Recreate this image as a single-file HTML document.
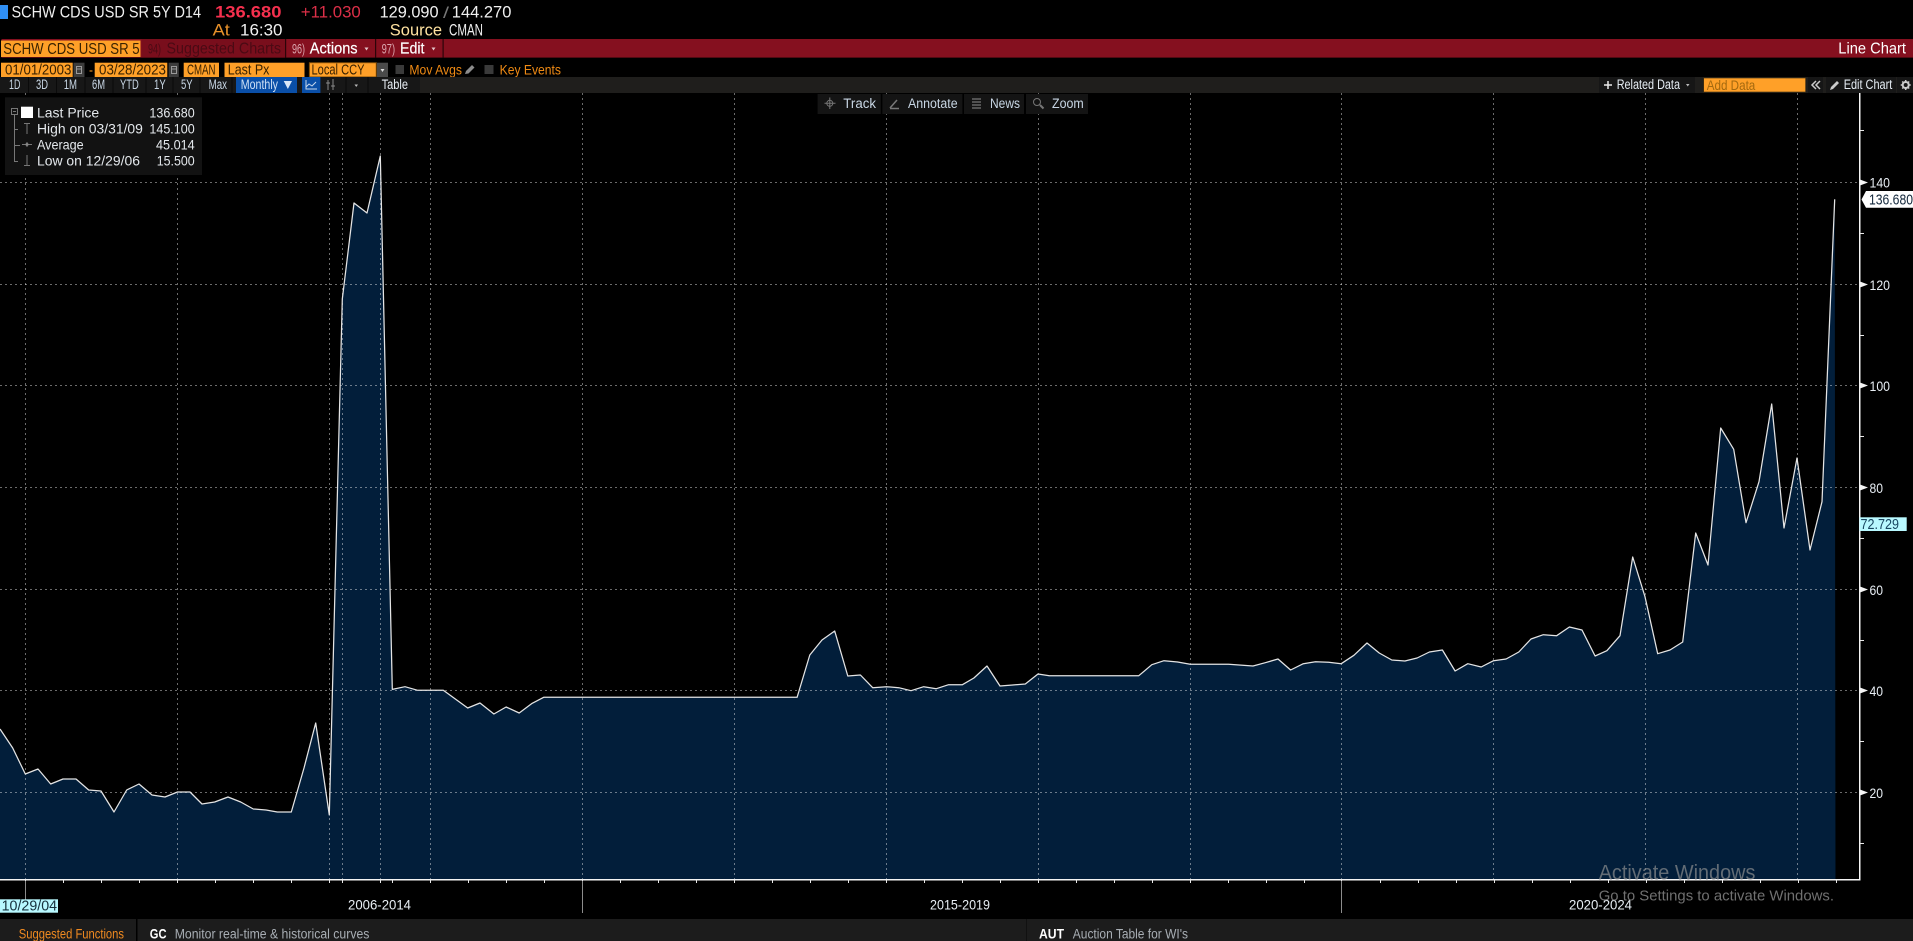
<!DOCTYPE html>
<html lang="en">
<head>
<meta charset="utf-8">
<title>SCHW CDS USD SR 5Y D14 - Line Chart</title>
<style>
html,body{margin:0;padding:0;background:#000;width:1913px;height:941px;overflow:hidden}
svg{display:block}
text{font-family:"Liberation Sans",sans-serif;white-space:pre}
.t1{font-size:16.5px;fill:#f0f0f0}
.tb{font-size:13.5px;fill:#c8d6e4}
.or{font-size:14.5px;fill:#3a2200}
.lg{font-size:14px;fill:#e4e8ec}
.ax{font-size:14px;fill:#e8eef4}
.grid{stroke:#fff;stroke-opacity:.42;stroke-dasharray:2 3;stroke-width:1;fill:none}
</style>
</head>
<body>
<svg width="1913" height="941" viewBox="0 0 1913 941" xmlns="http://www.w3.org/2000/svg">
<rect width="1913" height="941" fill="#000"/>

<!-- ===== Chart ===== -->
<polygon fill="#021e3a" points="0,729 12.7,748 25.3,774 38,769 50.7,784 63,779 76,779 88.7,790 101,791 114,812 126.7,790 139,784 152,795 165,797 177.5,792 190,792 202,804 214.7,802 228,797 240.7,802 253.3,809 266,810 277.3,812 291.3,812 304,768 315.7,723 329.3,815 342.3,299 354,203 367,213 380.3,156 392.3,689.4 405,686.7 417.7,690.3 443.3,690.3 467.7,708 480,703 493.9,714 506.1,707 519.2,713 532.2,703.3 543.7,697.3 797.1,697.3 809.8,655 822,640 834.7,631 847.8,676 860.4,675 872.7,687.7 886.5,686.7 898.8,687.7 911,690.7 923.7,686.7 936.3,688.7 948.6,684.7 962.4,684.7 973.9,678 987,666 1000,686 1012.7,685 1025.3,684 1038,674 1049.4,675.7 1138.8,675.7 1151.8,664.7 1164,660.7 1177.6,662 1190.2,664.3 1228.6,664.3 1253,666 1265.3,662.7 1278,659 1290.6,670 1303.3,663.7 1315.5,661.7 1328.6,662.3 1341.2,663.7 1353.9,655.3 1367,643 1379.2,653 1391.8,660 1404.9,661 1417.1,658 1429.4,652 1442.4,650 1455.1,671 1467.8,663.7 1481.2,667 1493.5,660.7 1506.1,659 1518.8,652 1531,639 1543.3,634.7 1556.7,635.7 1569.4,627 1582,630 1595.1,656 1606.9,650.7 1620,635.7 1632.7,557 1645,596.7 1657.7,653.7 1670,650 1682.7,642 1695.7,533 1708,565 1720.7,428 1733.7,449.3 1746,522.7 1759,481.7 1771.7,404 1784,528 1797,458 1810,550 1822,501.7 1834.7,199.3 1835.5,879 0,879"/>

<path class="grid" shape-rendering="crispEdges" d="M0 182.5H1860M0 284.5H1860M0 385.5H1860M0 487.5H1860M0 589.5H1860M0 690.5H1860M0 792.5H1860"/>
<path class="grid" shape-rendering="crispEdges" d="M25.5 93V879M177.5 93V879M329.5 93V879M342.5 93V879M380.5 93V879M430.5 93V879M582.5 93V879M734.5 93V879M886.5 93V879M1038.5 93V879M1190.5 93V879M1341.5 93V879M1493.5 93V879M1645.5 93V879M1797.5 93V879"/>

<polyline fill="none" stroke="#e4e4e4" stroke-width="1.25" stroke-linejoin="round" points="0,729 12.7,748 25.3,774 38,769 50.7,784 63,779 76,779 88.7,790 101,791 114,812 126.7,790 139,784 152,795 165,797 177.5,792 190,792 202,804 214.7,802 228,797 240.7,802 253.3,809 266,810 277.3,812 291.3,812 304,768 315.7,723 329.3,815 342.3,299 354,203 367,213 380.3,156 392.3,689.4 405,686.7 417.7,690.3 443.3,690.3 467.7,708 480,703 493.9,714 506.1,707 519.2,713 532.2,703.3 543.7,697.3 797.1,697.3 809.8,655 822,640 834.7,631 847.8,676 860.4,675 872.7,687.7 886.5,686.7 898.8,687.7 911,690.7 923.7,686.7 936.3,688.7 948.6,684.7 962.4,684.7 973.9,678 987,666 1000,686 1012.7,685 1025.3,684 1038,674 1049.4,675.7 1138.8,675.7 1151.8,664.7 1164,660.7 1177.6,662 1190.2,664.3 1228.6,664.3 1253,666 1265.3,662.7 1278,659 1290.6,670 1303.3,663.7 1315.5,661.7 1328.6,662.3 1341.2,663.7 1353.9,655.3 1367,643 1379.2,653 1391.8,660 1404.9,661 1417.1,658 1429.4,652 1442.4,650 1455.1,671 1467.8,663.7 1481.2,667 1493.5,660.7 1506.1,659 1518.8,652 1531,639 1543.3,634.7 1556.7,635.7 1569.4,627 1582,630 1595.1,656 1606.9,650.7 1620,635.7 1632.7,557 1645,596.7 1657.7,653.7 1670,650 1682.7,642 1695.7,533 1708,565 1720.7,428 1733.7,449.3 1746,522.7 1759,481.7 1771.7,404 1784,528 1797,458 1810,550 1822,501.7 1834.7,199.3"/>

<!-- axes -->
<path stroke="#f4f4f4" stroke-width="1.5" fill="none" shape-rendering="crispEdges" d="M0 879.5H1860.5M1859.5 93V880"/>
<path stroke="#e8e8e8" stroke-width="1" fill="none" shape-rendering="crispEdges" d="M25.5 880v3M63.5 880v3M101.5 880v3M139.5 880v3M177.5 880v3M215.5 880v3M253.5 880v3M291.5 880v3M329.5 880v3M342.5 880v3M380.5 880v3M392.5 880v3M430.5 880v3M468.5 880v3M506.5 880v3M544.5 880v3M582.5 880v3M620.5 880v3M658.5 880v3M696.5 880v3M734.5 880v3M772.5 880v3M810.5 880v3M848.5 880v3M886.5 880v3M924.5 880v3M962.5 880v3M1000.5 880v3M1038.5 880v3M1076.5 880v3M1114.5 880v3M1152.5 880v3M1190.5 880v3M1228.5 880v3M1266.5 880v3M1304.5 880v3M1341.5 880v3M1380.5 880v3M1418.5 880v3M1456.5 880v3M1494.5 880v3M1532.5 880v3M1570.5 880v3M1608.5 880v3M1646.5 880v3M1684.5 880v3M1722.5 880v3M1760.5 880v3M1798.5 880v3M1836.5 880v3"/>
<path stroke="#e8e8e8" stroke-width="1" fill="none" shape-rendering="crispEdges" d="M1860 130.5h4M1860 233.5h4M1860 335.5h4M1860 436.5h4M1860 538.5h4M1860 640.5h4M1860 741.5h4M1860 843.5h4"/>
<path fill="#f4f4f4" d="M1860 179.5l8 3-8 3zM1860 281.5l8 3-8 3zM1860 382.5l8 3-8 3zM1860 484.5l8 3-8 3zM1860 586.5l8 3-8 3zM1860 687.5l8 3-8 3zM1860 789.5l8 3-8 3z"/>

<text class="ax" x="1869.5" y="187.5" textLength="20.5" lengthAdjust="spacingAndGlyphs">140</text>
<text class="ax" x="1869.5" y="290" textLength="20.5" lengthAdjust="spacingAndGlyphs">120</text>
<text class="ax" x="1869.5" y="391" textLength="20.5" lengthAdjust="spacingAndGlyphs">100</text>
<text class="ax" x="1869.5" y="493" textLength="13.5" lengthAdjust="spacingAndGlyphs">80</text>
<text class="ax" x="1869.5" y="595" textLength="13.5" lengthAdjust="spacingAndGlyphs">60</text>
<text class="ax" x="1869.5" y="696" textLength="13.5" lengthAdjust="spacingAndGlyphs">40</text>
<text class="ax" x="1869.5" y="798" textLength="13.5" lengthAdjust="spacingAndGlyphs">20</text>

<polygon fill="#fff" points="1861.5,199.5 1866,191 1913,191 1913,207.7 1866,207.7"/>
<text x="1869" y="204.5" font-size="15" fill="#14283c" textLength="44" lengthAdjust="spacingAndGlyphs">136.680</text>
<rect x="1859.5" y="517.3" width="47.2" height="13.7" fill="#b8f8ff"/>
<text x="1860.5" y="529" font-size="14.5" fill="#174560" textLength="38.5" lengthAdjust="spacingAndGlyphs">72.729</text>

<!-- bottom axis labels -->
<path stroke="#8c8c8c" stroke-width="1" shape-rendering="crispEdges" d="M25.5 881V900M582.5 881V913M1341.5 881V913"/>
<rect x="0" y="899.3" width="58" height="13.4" fill="#b8f8ff"/>
<text x="1.6" y="910.7" font-size="14.5" fill="#16303c" textLength="55.5" lengthAdjust="spacingAndGlyphs">10/29/04</text>
<text class="ax" x="348" y="909.5" fill="#fff" font-size="15" textLength="63" lengthAdjust="spacingAndGlyphs">2006-2014</text>
<text class="ax" x="930" y="909.5" font-size="15" textLength="60" lengthAdjust="spacingAndGlyphs">2015-2019</text>
<text class="ax" x="1569" y="909.5" font-size="15" textLength="63" lengthAdjust="spacingAndGlyphs">2020-2024</text>

<!-- ===== Header row 1/2 ===== -->
<rect x="0" y="5" width="8" height="14" fill="#2f8ff5"/>
<text class="t1" x="11.5" y="17.3" textLength="189.5" lengthAdjust="spacingAndGlyphs">SCHW CDS USD SR 5Y D14</text>
<text x="215" y="17.3" font-size="17" font-weight="700" fill="#f5304e" textLength="66.5" lengthAdjust="spacingAndGlyphs">136.680</text>
<text x="300.8" y="17.3" font-size="16.5" fill="#dc2f48" textLength="60" lengthAdjust="spacingAndGlyphs">+11.030</text>
<text class="t1" x="379.6" y="17.3" textLength="59" lengthAdjust="spacingAndGlyphs">129.090</text>
<text x="443" y="18" font-size="16" fill="#777" textLength="6" lengthAdjust="spacingAndGlyphs">/</text>
<text class="t1" x="451.8" y="17.3" textLength="59.6" lengthAdjust="spacingAndGlyphs">144.270</text>
<text x="212.6" y="35.7" font-size="16.5" fill="#e8912a" textLength="17.2" lengthAdjust="spacingAndGlyphs">At</text>
<text class="t1" x="240" y="35.7" textLength="42.5" lengthAdjust="spacingAndGlyphs">16:30</text>
<text x="389.8" y="35.7" font-size="16.5" fill="#ffe2a0" textLength="52.2" lengthAdjust="spacingAndGlyphs">Source</text>
<text class="t1" x="449" y="35.7" textLength="34" lengthAdjust="spacingAndGlyphs">CMAN</text>

<!-- ===== Red bar ===== -->
<rect x="0" y="39" width="1913" height="18.6" fill="#85101f"/>
<rect x="0" y="39" width="1.5" height="18.6" fill="#000"/>
<rect x="1" y="40.5" width="139.5" height="16.5" fill="#ffa028"/>
<text x="3.3" y="54" font-size="15.5" fill="#3a2200" textLength="136.3" lengthAdjust="spacingAndGlyphs">SCHW CDS USD SR 5</text>
<rect x="141.5" y="39" width="143.5" height="18.6" fill="#790e1c"/>
<text x="148" y="53.5" font-size="14" fill="#4a0a14" textLength="13" lengthAdjust="spacingAndGlyphs">94)</text>
<text x="166.5" y="53.5" font-size="15.5" fill="#4a0a14" textLength="114.5" lengthAdjust="spacingAndGlyphs">Suggested Charts</text>
<rect x="285" y="39" width="1.2" height="18.6" fill="#2c0409"/>
<rect x="375" y="39" width="1.2" height="18.6" fill="#2c0409"/>
<rect x="442.5" y="39" width="1.2" height="18.6" fill="#2c0409"/>
<text x="292" y="53.5" font-size="14" fill="#dca8b0" textLength="13" lengthAdjust="spacingAndGlyphs">96)</text>
<text x="309.8" y="53.5" font-size="15.5" fill="#fff" stroke="#fff" stroke-width=".2" textLength="47.8" lengthAdjust="spacingAndGlyphs">Actions</text>
<path fill="#e4c4c8" d="M364.5 47.5h4l-2 3z"/>
<text x="381.6" y="53.5" font-size="14" fill="#dca8b0" textLength="13.5" lengthAdjust="spacingAndGlyphs">97)</text>
<text x="400" y="53.5" font-size="15.5" fill="#fff" stroke="#fff" stroke-width=".2" textLength="24.5" lengthAdjust="spacingAndGlyphs">Edit</text>
<path fill="#e4c4c8" d="M431.5 47.5h4l-2 3z"/>
<text x="1838.3" y="53.5" font-size="15.5" fill="#fff" textLength="67.7" lengthAdjust="spacingAndGlyphs">Line Chart</text>

<!-- ===== Row 4 ===== -->
<rect x="1" y="62.7" width="71.7" height="14.3" fill="#ffa028"/>
<text class="or" x="5" y="74.5" textLength="66.4" lengthAdjust="spacingAndGlyphs">01/01/2003</text>
<rect x="73.5" y="62.7" width="11" height="14.3" fill="#3c3c3c"/>
<path fill="none" stroke="#999" d="M76.5 66.5h5v7h-5zM76.5 69h5"/>
<text x="89" y="74.5" font-size="13" fill="#ffa028" textLength="4" lengthAdjust="spacingAndGlyphs">-</text>
<rect x="94.7" y="62.7" width="72.6" height="14.3" fill="#ffa028"/>
<text class="or" x="99" y="74.5" textLength="67" lengthAdjust="spacingAndGlyphs">03/28/2023</text>
<rect x="168.6" y="62.7" width="10.2" height="14.3" fill="#3c3c3c"/>
<path fill="none" stroke="#999" d="M171.5 66.5h5v7h-5zM171.5 69h5"/>
<rect x="183.7" y="62.7" width="35.3" height="14.3" fill="#ffa028"/>
<text class="or" x="187" y="74.5" textLength="28.5" lengthAdjust="spacingAndGlyphs">CMAN</text>
<rect x="224.5" y="62.7" width="80" height="14.3" fill="#ffa028"/>
<text class="or" x="227.8" y="74.5" textLength="41.6" lengthAdjust="spacingAndGlyphs">Last Px</text>
<rect x="309.4" y="62.7" width="66.9" height="14.3" fill="#ffa028" stroke="#7a4a08" stroke-width="1"/>
<text class="or" x="311.5" y="74.5" textLength="53" lengthAdjust="spacingAndGlyphs">Local CCY</text>
<rect x="377" y="62.7" width="11" height="14.3" fill="#4a4a4a"/>
<path fill="#ddd" d="M380.5 69h4l-2 3z"/>
<rect x="395.5" y="65" width="8.5" height="9" fill="#3a3a3a"/>
<text x="409.4" y="74.5" font-size="14" fill="#ef8a14" textLength="52.6" lengthAdjust="spacingAndGlyphs">Mov Avgs</text>
<path fill="#8c8c8c" d="M465 74l1-3 6-6 2.5 2.5-6 6z"/>
<rect x="484.5" y="65" width="9" height="9" fill="#3a3a3a"/>
<text x="499.6" y="74.5" font-size="14" fill="#ef8a14" textLength="61.4" lengthAdjust="spacingAndGlyphs">Key Events</text>

<!-- ===== Row 5 toolbar ===== -->
<rect x="0" y="77" width="1913" height="16" fill="#1f1e1c"/>
<rect x="0" y="77" width="420" height="16" fill="#171717"/>
<path stroke="#0a0a0a" stroke-width="1" d="M28.5 77v16M56.5 77v16M85 77v16M113 77v16M146 77v16M173 77v16M200 77v16M232 77v16M346 77v16M368 77v16"/>
<text class="tb" x="9" y="89" textLength="11.4" lengthAdjust="spacingAndGlyphs">1D</text>
<text class="tb" x="36" y="89" textLength="12" lengthAdjust="spacingAndGlyphs">3D</text>
<text class="tb" x="63.7" y="89" textLength="13.3" lengthAdjust="spacingAndGlyphs">1M</text>
<text class="tb" x="92" y="89" textLength="13" lengthAdjust="spacingAndGlyphs">6M</text>
<text class="tb" x="120" y="89" textLength="18.8" lengthAdjust="spacingAndGlyphs">YTD</text>
<text class="tb" x="154" y="89" textLength="11.7" lengthAdjust="spacingAndGlyphs">1Y</text>
<text class="tb" x="181" y="89" textLength="11.6" lengthAdjust="spacingAndGlyphs">5Y</text>
<text class="tb" x="208.6" y="89" textLength="18.4" lengthAdjust="spacingAndGlyphs">Max</text>
<rect x="236" y="77" width="61" height="16" fill="#0a4fa8"/>
<text class="tb" x="240.8" y="89" style="fill:#cfe0f5" textLength="37.2" lengthAdjust="spacingAndGlyphs">Monthly</text>
<path fill="#d8e6f8" d="M283.7 81h8.3l-4.15 8z"/>
<rect x="302" y="77" width="18.4" height="16" fill="#0a4fa8"/>
<path fill="none" stroke="#c8d8ec" stroke-width="1" d="M306 80v9h11M306 87l3-3 3 2 4-4"/>
<path fill="none" stroke="#8a8a8a" stroke-width="1" d="M328 80v10M333 79v11M326 83h4M331 86h4"/>
<path fill="#bbb" d="M354.5 84.5h3.5l-1.75 2.5z"/>
<text class="tb" x="381.6" y="89" style="fill:#e8eef4" textLength="26.4" lengthAdjust="spacingAndGlyphs">Table</text>

<!-- right tools -->
<rect x="1599" y="77" width="96" height="16" fill="#161616"/>
<path fill="none" stroke="#e8e8e8" stroke-width="1.5" d="M1604 85h8M1608 81v8"/>
<text class="tb" x="1616.7" y="89" style="fill:#e6edf4" textLength="63.3" lengthAdjust="spacingAndGlyphs">Related Data</text>
<path fill="#bbb" d="M1686 84h3.5l-1.75 2.5z"/>
<rect x="1703" y="77.5" width="103" height="15" fill="#3a2a10"/>
<rect x="1704" y="78.3" width="101.3" height="13.4" fill="#ffa028"/>
<text x="1706.7" y="90" font-size="14" fill="#a4690f" textLength="48.6" lengthAdjust="spacingAndGlyphs">Add Data</text>
<rect x="1808" y="77" width="15" height="16" fill="#161616"/>
<path fill="none" stroke="#ccc" stroke-width="1.5" d="M1816 81l-4 4 4 4M1820 81l-4 4 4 4"/>
<rect x="1826" y="77" width="70" height="16" fill="#161616"/>
<path fill="#ccc" d="M1830 90l1-3 6-6 2 2-6 6z"/>
<text class="tb" x="1843.7" y="89" style="fill:#e6edf4" textLength="48.6" lengthAdjust="spacingAndGlyphs">Edit Chart</text>
<rect x="1897" y="77" width="16" height="16" fill="#161616"/>
<circle cx="1905.7" cy="85" r="3" fill="none" stroke="#ccc" stroke-width="2"/>
<path stroke="#ccc" stroke-width="1.5" d="M1905.7 80v2M1905.7 88v2M1900.7 85h2M1908.7 85h2M1902.2 81.5l1.4 1.4M1907.8 87.1l1.4 1.4M1902.2 88.5l1.4-1.4M1907.8 82.9l1.4-1.4"/>

<!-- mid tools -->
<rect x="817.6" y="94" width="63.2" height="20" fill="#141414"/>
<rect x="882.4" y="94" width="80" height="20" fill="#141414"/>
<rect x="964" y="94" width="60" height="20" fill="#141414"/>
<rect x="1026" y="94" width="62" height="20" fill="#141414"/>
<circle cx="829.8" cy="103.3" r="3" fill="none" stroke="#777"/>
<path stroke="#777" d="M829.8 97.5v11.5M824.5 103.3h11"/>
<path stroke="#777" stroke-width="1.5" fill="none" d="M890 108l7-8M890 108.5h9"/>
<path stroke="#777" stroke-width="1.2" fill="none" d="M972 99h9M972 102h9M972 105h9M972 108h9"/>
<circle cx="1037" cy="102" r="3.5" fill="none" stroke="#777"/>
<path stroke="#777" stroke-width="2" d="M1040 105l3.5 3.5"/>
<text class="tb" x="843.3" y="108" textLength="32.7" lengthAdjust="spacingAndGlyphs">Track</text>
<text class="tb" x="908" y="108" textLength="49.6" lengthAdjust="spacingAndGlyphs">Annotate</text>
<text class="tb" x="990" y="108" textLength="30" lengthAdjust="spacingAndGlyphs">News</text>
<text class="tb" x="1052" y="108" textLength="31.7" lengthAdjust="spacingAndGlyphs">Zoom</text>

<!-- ===== Legend ===== -->
<rect x="5" y="97.3" width="197" height="77.7" fill="#121212"/>
<rect x="11.5" y="108.5" width="6" height="6" fill="none" stroke="#777"/>
<path stroke="#777" fill="none" shape-rendering="crispEdges" d="M14.5 115V161.5H18M14.5 129.5H18M14.5 145.5H20M13 111.5h3"/>
<rect x="21" y="106.7" width="12" height="11.3" fill="#fff"/>
<path stroke="#777" fill="none" d="M24 123.5h6M27 123.5V134M22 144.5h10M27 142v5M27 155v10M24 165.5h6"/>
<circle cx="27" cy="144.5" r="1.5" fill="#888"/>
<text class="lg" x="37" y="117.3" textLength="62.2" lengthAdjust="spacingAndGlyphs">Last Price</text>
<text class="lg" x="149.4" y="117.3" textLength="45.3" lengthAdjust="spacingAndGlyphs">136.680</text>
<text class="lg" x="37" y="133.3" textLength="105.9" lengthAdjust="spacingAndGlyphs">High on 03/31/09</text>
<text class="lg" x="149.4" y="133.3" textLength="45.3" lengthAdjust="spacingAndGlyphs">145.100</text>
<text class="lg" x="37" y="149.3" textLength="46.7" lengthAdjust="spacingAndGlyphs">Average</text>
<text class="lg" x="156" y="149.3" textLength="38.7" lengthAdjust="spacingAndGlyphs">45.014</text>
<text class="lg" x="37" y="165.7" textLength="103" lengthAdjust="spacingAndGlyphs">Low on 12/29/06</text>
<text class="lg" x="156.7" y="165.7" textLength="38" lengthAdjust="spacingAndGlyphs">15.500</text>

<!-- ===== Footer ===== -->
<rect x="0" y="919" width="1913" height="22" fill="#1c1c1c"/>
<rect x="136" y="919" width="1.5" height="22" fill="#000"/>
<rect x="1026" y="919" width="1" height="22" fill="#111"/>
<text x="18.8" y="938.7" font-size="13.5" fill="#f08a20" textLength="105.2" lengthAdjust="spacingAndGlyphs">Suggested Functions</text>
<text x="149.8" y="938.7" font-size="13.5" font-weight="700" fill="#fff" textLength="16.7" lengthAdjust="spacingAndGlyphs">GC</text>
<text x="174.7" y="938.7" font-size="13.5" fill="#a8aeb4" textLength="194.7" lengthAdjust="spacingAndGlyphs">Monitor real-time &amp; historical curves</text>
<text x="1039" y="938.7" font-size="13.5" font-weight="700" fill="#fff" textLength="25" lengthAdjust="spacingAndGlyphs">AUT</text>
<text x="1072.8" y="938.7" font-size="13.5" fill="#a8aeb4" textLength="115.2" lengthAdjust="spacingAndGlyphs">Auction Table for WI's</text>

<!-- ===== Watermark ===== -->
<text x="1598.7" y="879.3" font-size="21" fill="#7a7f85" fill-opacity=".8" textLength="156.7" lengthAdjust="spacingAndGlyphs">Activate Windows</text>
<text x="1598.7" y="900.7" font-size="15" fill="#707070" textLength="235.3" lengthAdjust="spacingAndGlyphs">Go to Settings to activate Windows.</text>
</svg>
</body>
</html>
